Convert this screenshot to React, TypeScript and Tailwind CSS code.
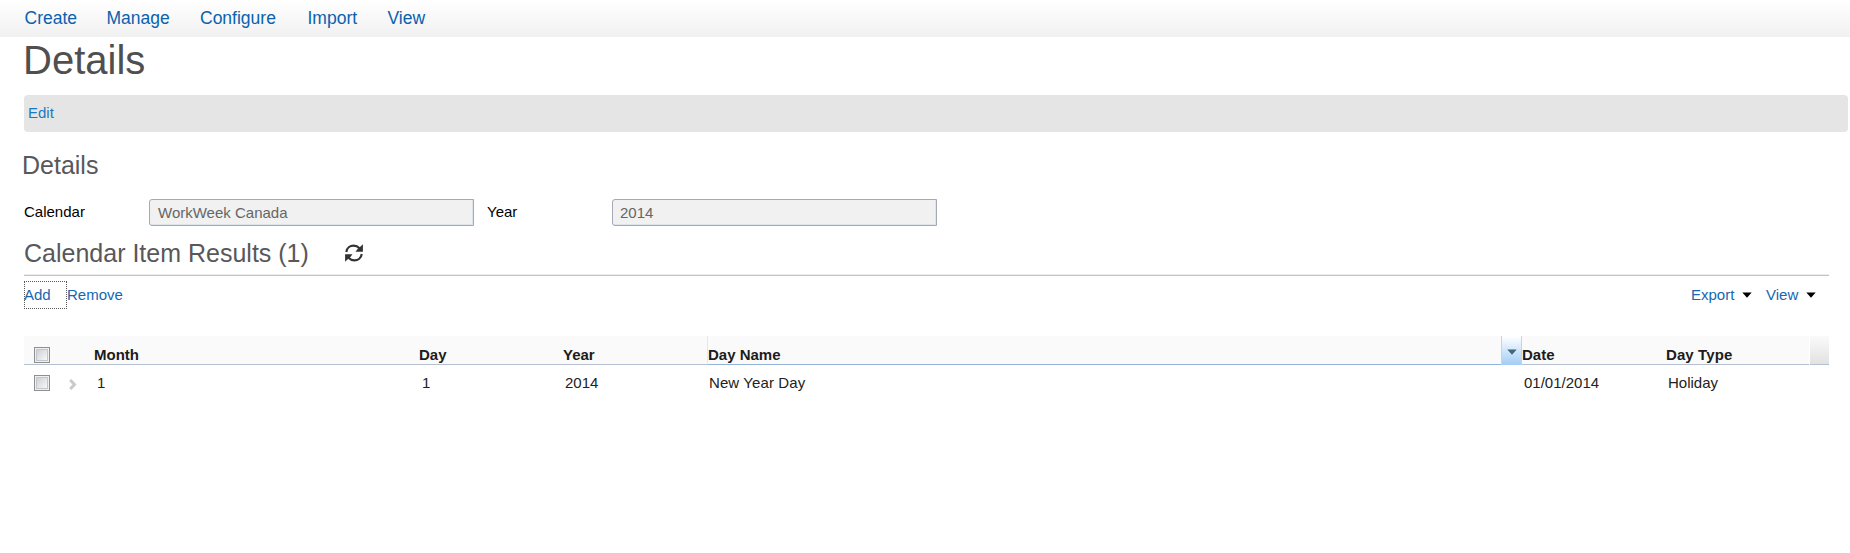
import React from "react";

const navItems = [
  { label: "Create", cls: "w-[82px]" },
  { label: "Manage", cls: "w-[93.5px]" },
  { label: "Configure", cls: "w-[107.5px]" },
  { label: "Import", cls: "w-[80px]" },
  { label: "View", cls: "w-[60px]" },
];

function Field({ label, value, labelCls, valueCls }: { label: string; value: string; labelCls: string; valueCls: string }) {
  return (
    <label className="flex">
      <span className={"text-black leading-[26px] " + labelCls}>{label}</span>
      <span
        className={
          "w-[325px] h-[27px] border border-[#a5a9b4] rounded-l-[3px] bg-[#f1f1f1] shadow-[inset_-1px_-1px_0_#dfe3ea] leading-[26px] text-[#666] " +
          valueCls
        }
      >
        {value}
      </span>
    </label>
  );
}

function Checkbox() {
  return (
    <span className="block w-4 h-4 border border-[#8e8f8f] bg-[#f0f0f0] p-[1px]">
      <span className="block w-full h-full border border-[#c3c7cc] bg-linear-to-br from-[#cdd1d8] to-[#f8f8f8]" />
    </span>
  );
}

function Caret({ className }: { className: string }) {
  return (
    <svg className={className} width="10" height="6" viewBox="0 0 10 6">
      <path d="M0.300 0.500H9.700L5 5.700Z" fill="currentColor" />
    </svg>
  );
}

function RefreshIcon() {
  return (
    <svg width="18" height="18" viewBox="0 0 18 18" fill="none" stroke="#333" strokeWidth="2.200">
      <path d="M1.300 8C1.800 4 5 1.600 8.600 1.600C11 1.600 13 2.600 14.500 4.200" />
      <path d="M17.900 0.300V7.700H10.500L12.800 4.800L15.500 2.500Z" fill="#333" stroke="none" />
      <path d="M16.700 10C16.200 14 13 16.400 9.400 16.400C7 16.400 5 15.400 3.500 13.800" />
      <path d="M0.100 17.700V10.300H7.500L5.200 13.200L2.500 15.500Z" fill="#333" stroke="none" />
    </svg>
  );
}

export default function App() {
  return (
    <div className="w-full h-[553px] overflow-hidden bg-white font-['Liberation_Sans',Arial,sans-serif] text-[15px] text-[#222]">
      <nav className="flex h-[37px] pl-[24.5px] bg-linear-to-b from-white to-[#f1f1f1] text-[17.5px] leading-[36px] text-[#0a62ae]">
        {navItems.map((n) => (
          <a key={n.label} className={n.cls}>{n.label}</a>
        ))}
      </nav>
      <h1 className="pl-[23px] text-[40px] leading-[46px] text-[#4f4f4f]">Details</h1>
      <div className="mt-3 ml-6 mr-[2px] h-[37px] rounded-[4px] bg-[#e5e5e5] pl-1 leading-[36px] text-[#1a7abf]">Edit</div>
      <h2 className="mt-[19px] pl-[22px] text-[25px] leading-[28px] text-[#58585b]">Details</h2>
      <div className="mt-5 flex pl-6">
        <Field label="Calendar" value="WorkWeek Canada" labelCls="w-[125px]" valueCls="pl-2" />
        <Field label="Year" value="2014" labelCls="w-[138px] pl-[13px]" valueCls="pl-[7px]" />
      </div>
      <div className="ml-6 w-[1805px]">
        <div className="mt-[6px] flex h-[42px] items-center">
          <h2 className="w-[321px] text-[25px] leading-[42px] text-[#58585b]">Calendar Item Results (1)</h2>
          <RefreshIcon />
        </div>
        <div className="h-[2px] border-t border-b border-t-[#ececec] border-b-[#c4c4c4]" />
        <div className="mt-[5px] flex h-7 leading-[28px] text-[#1567b3]">
          <span className="w-[43px] outline-1 -outline-offset-1 outline-dotted outline-[#555]">Add</span>
          <span className="grow">Remove</span>
          <span className="flex w-[75px] items-center">Export<Caret className="ml-[8px] text-black" /></span>
          <span className="flex w-[63px] items-center">View<Caret className="ml-[8px] text-black" /></span>
        </div>
        <div className="mt-[27px] flex h-[29px] leading-[20px] font-bold text-[#1c1c1c]">
          <div className="flex w-[683px] border-b border-[#b4c0d2] bg-[#fafafa]">
            <span className="w-[70px] pl-[10px] pt-[11px]"><Checkbox /></span>
            <span className="w-[325px] pt-[9px]">Month</span>
            <span className="w-[144px] pt-[9px]">Day</span>
            <span className="pt-[9px]">Year</span>
          </div>
          <div className="w-[794px] border-b border-l border-b-[#93b4d8] border-l-[#dcebf8] bg-[#fafafa] pt-[9px]">Day Name</div>
          <div className="flex w-[21px] justify-center border-l border-r border-[#bcd7f1] bg-linear-to-b from-white to-[#a3ccf5] pt-[13px]">
            <Caret className="text-[#3f6581]" />
          </div>
          <div className="flex w-[287px] border-b border-[#b4c0d2] bg-[#fafafa] pt-[9px]">
            <span className="w-[144px]">Date</span>
            <span className="tracking-[0.1px]">Day Type</span>
          </div>
          <div className="ml-px grow border-b border-[#b4c0d2] bg-linear-to-b from-[#fafafa] to-[#e2e2e2]" />
        </div>
        <div className="flex h-9 leading-[36px]">
          <span className="w-[45px] pl-[10px] pt-[10px]"><Checkbox /></span>
          <span className="w-[28px] pt-[14px]">
            <svg width="8" height="11" viewBox="0 0 8 11" fill="none" stroke="#cacaca" strokeWidth="3">
              <path d="M1.200 1L5.500 5.500L1.200 10" />
            </svg>
          </span>
          <span className="w-[325px]">1</span>
          <span className="w-[143px]">1</span>
          <span className="w-[144px]">2014</span>
          <span className="w-[815px] tracking-[0.1px]">New Year Day</span>
          <span className="w-[144px]">01/01/2014</span>
          <span>Holiday</span>
        </div>
      </div>
    </div>
  );
}
